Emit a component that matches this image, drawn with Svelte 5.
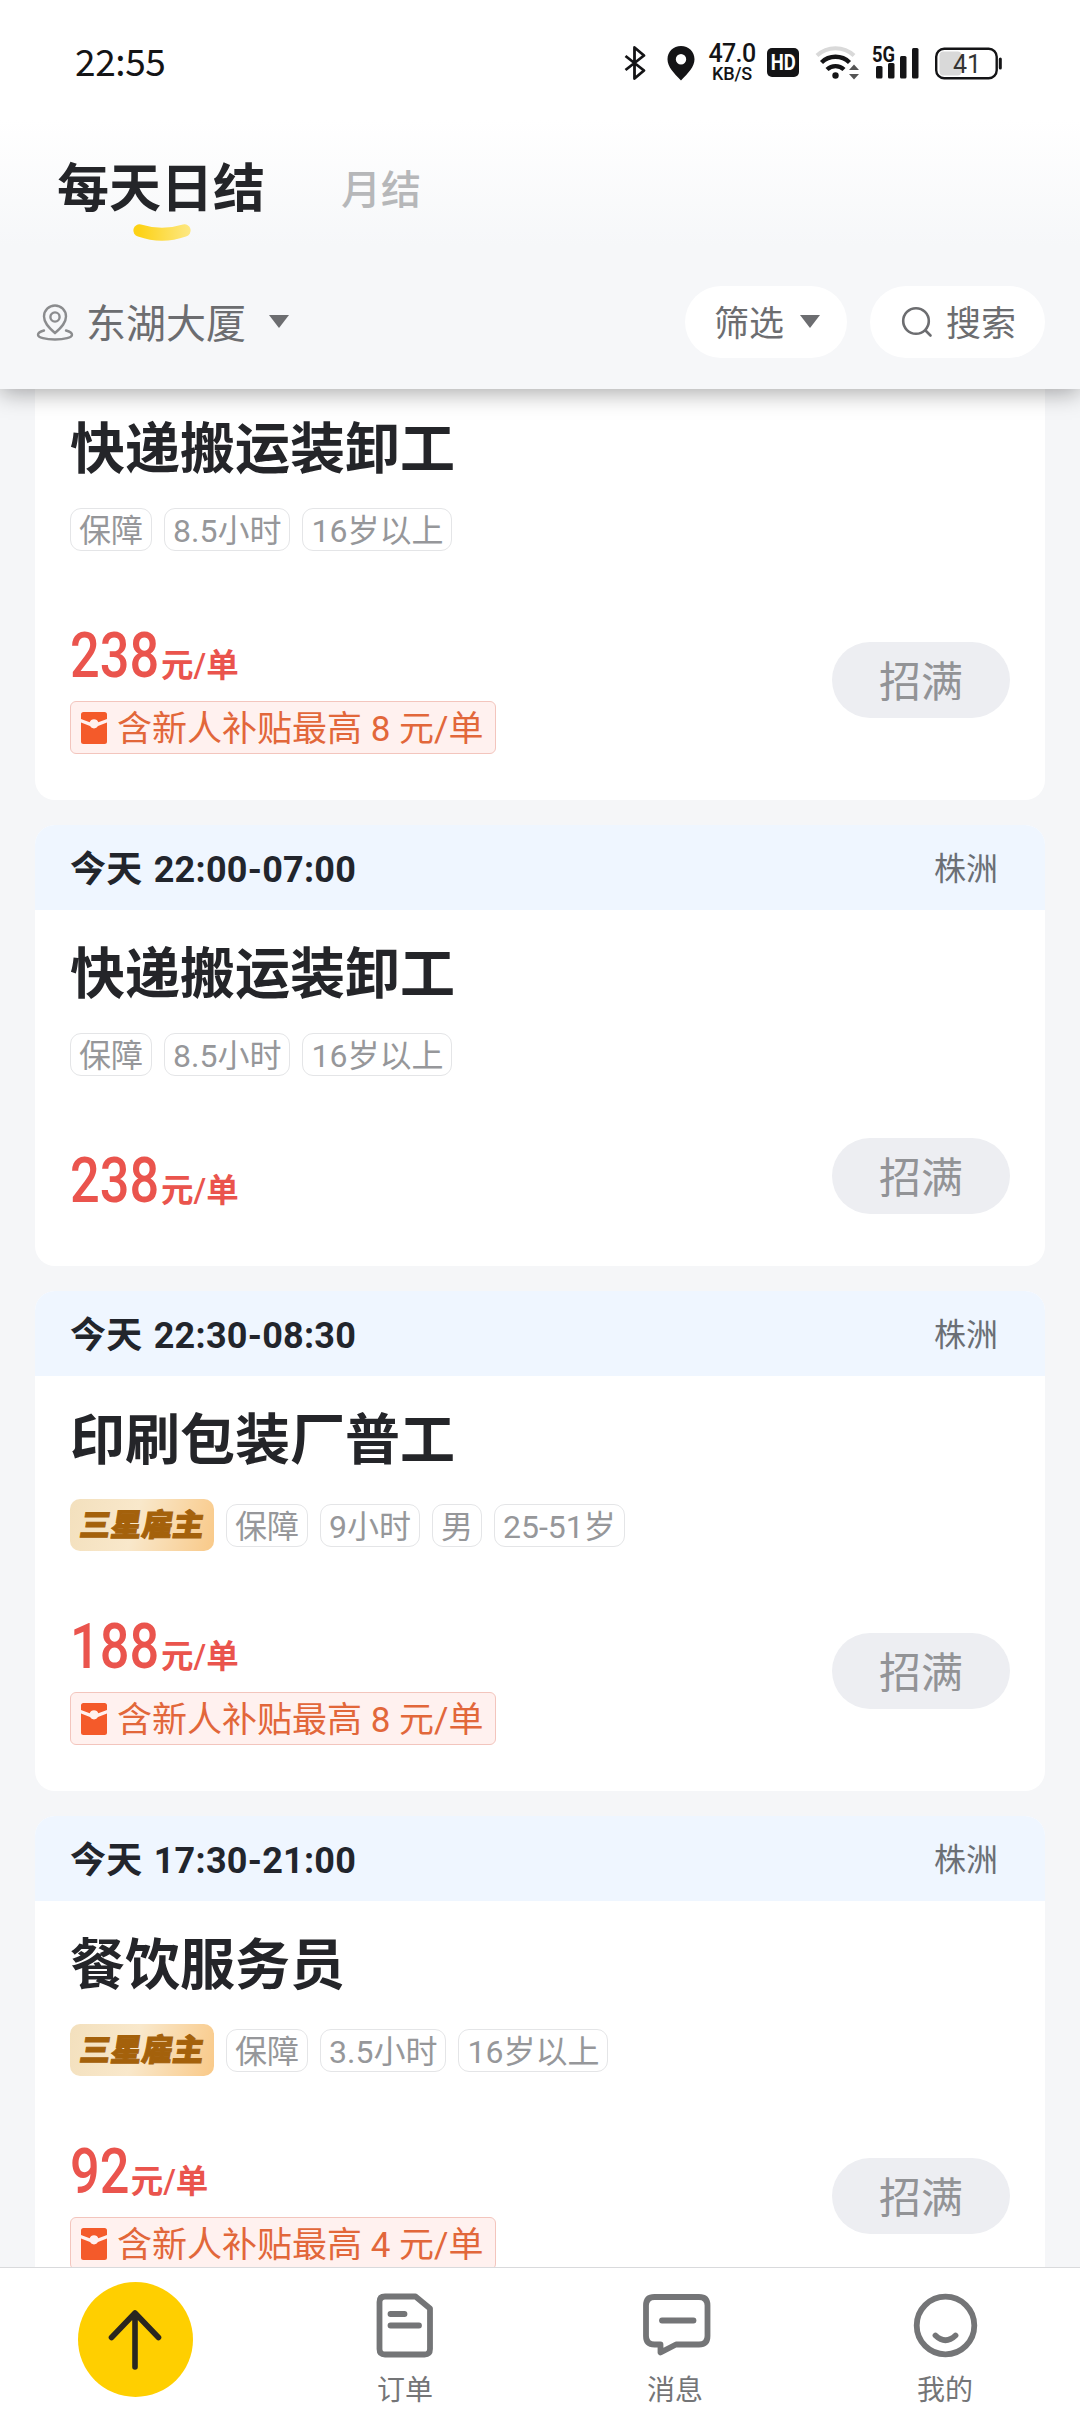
<script>
  const jobs = [
    { time: '', city: '', title: '快递搬运装卸工', star: '', tags: ['保障', '8.5小时', '16岁以上'], price: '238', bonus: '8' },
    { time: '今天 22:00-07:00', city: '株洲', title: '快递搬运装卸工', star: '', tags: ['保障', '8.5小时', '16岁以上'], price: '238', bonus: '' },
    { time: '今天 22:30-08:30', city: '株洲', title: '印刷包装厂普工', star: '三星雇主', tags: ['保障', '9小时', '男', '25-51岁'], price: '188', bonus: '8' },
    { time: '今天 17:30-21:00', city: '株洲', title: '餐饮服务员', star: '三星雇主', tags: ['保障', '3.5小时', '16岁以上'], price: '92', bonus: '4' }
  ];
</script>

<div class="screen">
  <header class="top">
    <div class="status">
      <span class="clock">22:55</span>
      <div class="indicators">
        <svg class="bt" width="22" height="36" viewBox="0 0 22 36" fill="none" stroke="#141416" stroke-width="2.8" stroke-linejoin="round"><path d="M1.5 11 20 25.5 10.5 33.5V2.5L20 10.5 1.5 25" /></svg>
        <svg class="loc" width="28" height="36" viewBox="0 0 28 36"><path fill="#141416" fill-rule="evenodd" d="M14 1C6.3 1 .5 6.8.5 14.2.5 22 7 28 14 35.500 21 28 27.500 22 27.500 14.200 27.500 6.800 21.700 1 14 1ZM14 9a5.200 5.200 0 1 1 0 10.400A5.200 5.200 0 0 1 14 9Z" /></svg>
        <div class="speed"><b>47.0</b><span>KB/S</span></div>
        <div class="hd"><span>HD</span></div>
        <svg class="wifi" width="45" height="36" viewBox="0 0 45 36" fill="none" stroke-width="4"><path stroke="#d9d9d9" d="M2 10.500a27 27 0 0 1 37 0" /><path stroke="#141416" stroke-width="4.400" d="M6.500 17.500a20 20 0 0 1 28 0M12 24.500a12.500 12.500 0 0 1 17 0" /><circle cx="20.500" cy="30.500" r="3.200" fill="#141416" /><path fill="#555" d="m34 25 5-5.500 5 5.500ZM34 29h10l-5 5.500Z" /></svg>
        <svg class="cell" width="47" height="36" viewBox="0 0 47 36" fill="#141416"><text x="0" y="17" class="net" textLength="23" lengthAdjust="spacingAndGlyphs">5G</text><rect x="4" y="21" width="6.500" height="12.500" rx="1.500" /><rect x="16" y="18" width="6.500" height="15.500" rx="1.500" /><rect x="28" y="11" width="6.500" height="22.500" rx="1.500" /><rect x="40" y="3" width="6.500" height="30.500" rx="1.500" /></svg>
        <svg class="bat" width="67" height="36" viewBox="0 0 67 36"><rect x="4.500" y="6.500" width="22" height="24" rx="4" fill="#d9d9d9" /><rect x="1.200" y="3.700" width="60.500" height="29.500" rx="8" fill="none" stroke="#141416" stroke-width="2.400" /><rect x="63.800" y="12.500" width="3" height="12" rx="1.500" fill="#141416" /><text x="32" y="27.500" text-anchor="middle" class="level">41</text></svg>
      </div>
    </div>
    <div class="tabs">
      <div class="tab active">每天日结
        <svg class="smile" width="56" height="20" viewBox="0 0 56 20"><defs><linearGradient id="smileFill" x1="0" x2="1" y1="0" y2="0"><stop offset=".1" stop-color="#fdd216" /><stop offset="1" stop-color="#fde884" /></linearGradient></defs><path d="M7 1.500Q28 8 49 1.500A6 6 0 0 1 52 13.500Q28 22 4 13.500A6 6 0 0 1 7 1.500Z" fill="url(#smileFill)" /></svg>
      </div>
      <div class="tab">月结</div>
    </div>
    <div class="filters">
      <div class="place">
        <svg class="pin" width="38" height="38" viewBox="0 0 38 38" fill="none" stroke="#8b8c8e" stroke-width="2.400" stroke-linecap="round"><path d="M19 30C12 24 8 19.500 8 13.500a11 11 0 0 1 22 0C30 19.500 26 24 19 30Z" /><circle cx="19" cy="14" r="4.600" /><path d="M8 27.500c-3.500 1-6 2.500-6 4.200C2 34.500 9.500 36.500 19 36.500s17-2 17-4.800c0-1.700-2.500-3.200-6-4.200" /></svg>
        <span>东湖大厦</span>
        <i class="caret"></i>
      </div>
      <div class="pill sift"><span>筛选</span><i class="caret"></i></div>
      <div class="pill find">
        <svg width="32" height="32" viewBox="0 0 32 32" fill="none" stroke="#6c6d70" stroke-width="2.600" stroke-linecap="round"><circle cx="15" cy="15" r="12.800" /><path d="m25 25 4.500 4.500" /></svg>
        <span>搜索</span>
      </div>
    </div>
  </header>

  <main class="list">
    {#each jobs as job}
      <article class="card">
        {#if job.time}
          <div class="when"><strong>{job.time}</strong><span>{job.city}</span></div>
        {/if}
        <div class="body" class:subsidised={job.bonus}>
          <h2>{job.title}</h2>
          <div class="tags" class:starred={job.star}>
            {#if job.star}<span class="star"><em>{job.star}</em></span>{/if}
            {#each job.tags as tag}<span class="tag">{tag}</span>{/each}
          </div>
          <div class="deal">
            <div class="pay">
              <div class="price"><span class="num" style="--digits: {job.price.length}">{job.price}</span><span class="unit">元<i>/</i>单</span></div>
              {#if job.bonus}
                <div class="bonus">
                  <svg width="28" height="34" viewBox="0 0 28 34" fill="#f45a2a"><path d="M3.500 1h21Q27 1 27 3.500V8L18.300 11.300a4.500 4.500 0 0 0-8.600 0L1 8V3.500Q1 1 3.500 1Z" /><path d="M1 11.500 10 15a4.500 4.500 0 0 0 8 0L27 11.500V30.500Q27 33 24.500 33h-21Q1 33 1 30.500Z" /></svg>
                  <span>含新人补贴最高 {job.bonus} 元/单</span>
                </div>
              {/if}
            </div>
            <div class="full">招满</div>
          </div>
        </div>
      </article>
    {/each}
  </main>

  <nav class="dock">
    <div class="item">
      <div class="up"><svg width="56" height="62" viewBox="0 0 56 62" fill="none" stroke="#2a2620" stroke-width="5.600" stroke-linecap="round" stroke-linejoin="round"><path d="M28 58V4M4.500 28.500 28 4l23.500 24.500" /></svg></div>
    </div>
    <div class="item labelled">
      <svg width="72" height="66" viewBox="0 0 72 66" fill="none" stroke="#747577" stroke-width="5.800" stroke-linecap="round" stroke-linejoin="round"><path d="M16 3.500H46.500L61 15.500V56Q61 61.500 55.500 61.500H16Q10.500 61.500 10.500 56V9Q10.500 3.500 16 3.500ZM21.500 21h14M21.500 32.500h28.500" /></svg>
      <span>订单</span>
    </div>
    <div class="item labelled">
      <svg width="72" height="66" viewBox="0 0 72 66" fill="none" stroke="#747577" stroke-width="5.800" stroke-linecap="round" stroke-linejoin="round"><path d="M15.500 4H60Q68.500 4 68.500 12.500V43Q68.500 51.500 60 51.500H37L21.500 59.500V51.500H15.500Q7 51.500 7 43V12.500Q7 4 15.500 4Z" /><path d="M23 27.500h31.500" /></svg>
      <span>消息</span>
    </div>
    <div class="item labelled">
      <svg width="72" height="66" viewBox="0 0 72 66" fill="none" stroke="#747577" stroke-width="5.800" stroke-linecap="round"><circle cx="36.500" cy="32.500" r="28.800" /><path d="M26.500 42.500q10 9.500 20 0" /></svg>
      <span>我的</span>
    </div>
  </nav>
</div>

<style>
  :global(body) { background: #f5f6f8; }
  .screen {
    width: 1080px;
    height: 2412px;
    overflow: hidden;
    display: flex;
    flex-direction: column;
    background: #f5f6f8;
    font-family: Roboto, "Noto Sans CJK SC", sans-serif;
    color: #242529;
  }
  .screen :global(*) { box-sizing: border-box; }
  svg { display: block; flex: none; overflow: visible; }
  .top {
    flex: none;
    height: 389px;
    position: relative;
    z-index: 1;
    background: linear-gradient(#fff 120px, #f6f7f9 245px);
    box-shadow: 0 4px 22px rgba(0, 0, 0, 0.34);
    display: flex;
    flex-direction: column;
  }
  .status { flex: none; height: 125px; padding: 0 78px 0 75px; display: flex; justify-content: space-between; align-items: center; }
  .clock { font: 400 37px/40px "Noto Sans CJK SC", sans-serif; color: #141416; letter-spacing: -0.4px; padding-bottom: 5px; }
  .indicators { display: flex; align-items: center; color: #141416; }
  .loc { margin-left: 21px; }
  .speed { margin-left: 14px; width: 46px; padding-top: 3px; display: flex; flex-direction: column; align-items: center; }
  .speed b { font: 500 25px/20px Roboto, sans-serif; letter-spacing: -0.6px; }
  .speed span { font: 500 18px/20px Roboto, sans-serif; letter-spacing: -0.2px; }
  .hd { margin-left: 12px; width: 32px; height: 29px; border-radius: 5px; background: #141416; color: #fff; display: grid; place-items: center; font: 700 22.500px/29px Roboto, sans-serif; }
  .hd span { transform: scaleX(0.82); }
  .wifi { margin-left: 16px; }
  .cell { margin-left: 12px; }
  .net { font: 700 22px Roboto, sans-serif; }
  .bat { margin-left: 16px; }
  .level { font: 400 25px Roboto, sans-serif; fill: #333; }
  .tabs { flex: none; height: 130px; padding-left: 57px; display: flex; align-items: center; gap: 76px; }
  .tab { font-size: 40px; line-height: 63px; color: #b6b7b9; font-weight: 500; }
  .tab.active { position: relative; font-size: 52px; line-height: 60px; font-weight: 700; color: #242529; }
  .smile { position: absolute; left: 77px; bottom: -23px; }
  .filters { flex: none; height: 134px; padding: 0 35px 0 36px; display: flex; align-items: center; color: #6c6d70; }
  .place { display: flex; align-items: center; font-size: 40px; margin-right: auto; }
  .place span { margin: 0 23px 0 12px; padding-bottom: 2px; }
  .caret { border: 10.500px solid transparent; border-top: 13px solid #6c6d70; border-bottom: 0; margin-bottom: 1px; }
  .pill { height: 72px; border-radius: 36px; background: #fff; display: flex; align-items: center; font-size: 35px; }
  .pill span { padding-bottom: 3px; }
  .sift { width: 162px; padding-left: 29px; gap: 16px; }
  .find { width: 175px; margin-left: 23px; padding-left: 31px; gap: 13px; }
  .list { flex: 1; min-height: 0; padding: 0 35px; overflow: hidden; display: flex; flex-direction: column; gap: 25px; margin-top: -4px; }
  .card { flex: none; background: #fff; border-radius: 20px; overflow: hidden; }
  .card:first-child { border-radius: 0 0 20px 20px; }
  .when { height: 85px; padding: 0 47px 4px 35px; background: #eff6ff; display: flex; align-items: center; justify-content: space-between; }
  .when strong { font-size: 36px; font-weight: 700; color: #22252c; letter-spacing: 0.25px; word-spacing: 2px; }
  .when span { font-size: 32px; color: #6b6f75; }
  .body { padding: 23px 35px 45px; }
  .body.subsidised { padding-bottom: 46px; }
  h2 { margin: 0; height: 80px; font-size: 55px; line-height: 83px; font-weight: 700; }
  .tags { margin-top: 20px; height: 43px; display: flex; align-items: center; gap: 12px; }
  .tags.starred { height: 52px; }
  .tag { height: 43px; padding: 0 8px; border: 1px solid #e4e5e7; border-radius: 11px; font-size: 32px; line-height: 44px; color: #96979a; }
  .star { width: 144px; height: 52px; border-radius: 10px; background: linear-gradient(105deg, #f3e0bd, #f9e8cb 45%, #f9c988); display: grid; place-items: center; }
  .star em { font-size: 31px; line-height: 54px; font-style: normal; font-weight: 900; color: #a4610b; -webkit-text-stroke: 1px #a4610b; transform: skewX(-9deg); }
  .deal { margin-top: 55px; display: flex; justify-content: space-between; align-items: center; }
  .starred + .deal { margin-top: 46px; }
  .pay { display: flex; flex-direction: column; align-items: flex-start; gap: 5px; }
  .price { height: 90px; color: #ea544d; display: flex; align-items: baseline; }
  /* The narrow figures are scaled, so the width they give up is taken back digit by digit. */
  .num { font: 500 63px/99px Roboto, sans-serif; transform: scaleX(0.83); transform-origin: left; margin-right: calc(var(--digits) * -5.5px); }
  .unit { font-size: 32.500px; line-height: 40px; font-weight: 700; }
  .unit i { font-style: normal; font-weight: 500; }
  .bonus { width: 426px; height: 53px; border: 1px solid #f3c5bd; border-radius: 6px; background: #fff1ef; padding-left: 9px; display: flex; align-items: center; gap: 9px; font-size: 35px; line-height: 50px; color: #e2673a; white-space: nowrap; }
  .bonus span { padding-top: 5px; }
  .full { width: 178px; height: 76px; border-radius: 38px; background: #edeef2; color: #929396; font-size: 42px; line-height: 81px; text-align: center; }
  .dock { flex: none; height: 145px; background: #fff; border-top: 1px solid #d9dadc; display: grid; grid-template-columns: repeat(4, 270px); }
  .item { display: flex; flex-direction: column; align-items: center; padding-top: 14px; }
  .labelled { padding-top: 25px; }
  .up { width: 115px; height: 115px; border-radius: 50%; background: #ffcf00; display: grid; place-items: center; }
  .item span { margin-top: 12px; font-size: 28px; line-height: 40px; color: #747577; }
</style>
